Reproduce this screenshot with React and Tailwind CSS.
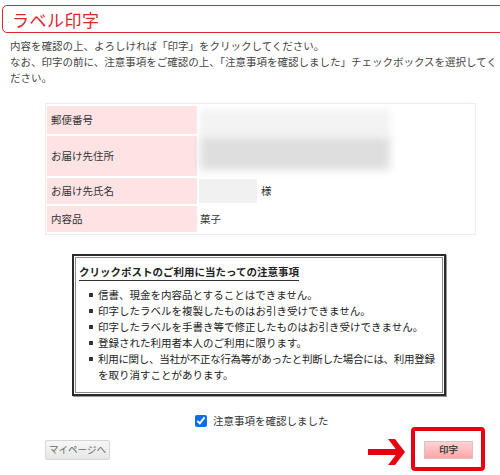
export default function App() {
  const font = { fontFamily: '"Noto Sans CJK JP", "Noto Sans", sans-serif' };
  return (
    <div className="w-[500px] h-[475px] overflow-hidden bg-white text-[#333] text-[10.5px] leading-[16px]" style={font}>
      <div className="pt-[5px] pl-[2px]">
        <div className="w-[520px] h-[28px] border-[1.5px] border-[#e0262d] rounded-[5px] flex items-center pl-[9px]">
          <span className="text-[17px] text-[#e0262d] leading-none tracking-[0.5px]">ラベル印字</span>
        </div>
      </div>

      <div className="mt-[5px] pl-[10px] pr-[2px] text-[#444]">
        <p>内容を確認の上、よろしければ「印字」をクリックしてください。</p>
        <p>なお、印字の前に、注意事項をご確認の上、「注意事項を確認しました」チェックボックスを選択してく<br />ださい。</p>
      </div>

      <table className="mt-[17px] ml-[45px] w-[431px] border border-[#fbe6e7] border-separate border-spacing-x-[1px] border-spacing-y-[2px]">
        <tbody>
          <tr className="h-[28px]">
            <td className="w-[150px] bg-[#fde3e4] pl-[4px] align-middle">郵便番号</td>
            <td className="pl-[2px] align-bottom">
              <div className="w-[190px] h-[24px] bg-[#f3f3f3] blur-[3px]" />
            </td>
          </tr>
          <tr className="h-[40px]">
            <td className="bg-[#fde3e4] pl-[4px] align-middle">お届け先住所</td>
            <td className="pl-[2px] align-top">
              <div className="w-[190px] h-[34px] bg-[#dedede] blur-[4px]" />
            </td>
          </tr>
          <tr className="h-[26px]">
            <td className="bg-[#fde3e4] pl-[4px] align-middle">お届け先氏名</td>
            <td className="pl-[1px] align-middle">
              <div className="flex items-center gap-[4px]">
                <div className="w-[58px] h-[24px] bg-[#f1f1f1]" />
                <span>様</span>
              </div>
            </td>
          </tr>
          <tr className="h-[26px]">
            <td className="bg-[#fde3e4] pl-[4px] align-middle">内容品</td>
            <td className="pl-[2px] align-middle">菓子</td>
          </tr>
        </tbody>
      </table>

      <div className="mt-[19px] ml-[72px] w-[374px] border-2 border-[#2a2a2a] p-px shadow-[1px_1px_0_#999]">
        <div className="border border-[#8a8a8a] pl-[3px] pt-[5px] pb-[9px] text-[#222]">
          <div className="inline-block font-bold border-b border-[#333] leading-[17px]">クリックポストのご利用に当たっての注意事項</div>
          <ul className="mt-[6px] pl-[10px]">
            {[
              '信書、現金を内容品とすることはできません。',
              '印字したラベルを複製したものはお引き受けできません。',
              '印字したラベルを手書き等で修正したものはお引き受けできません。',
              '登録された利用者本人のご利用に限ります。',
            ].map((t) => (
              <li key={t} className="flex">
                <span className="w-[9px] shrink-0 flex items-center"><span className="block w-[4px] h-[4px] bg-[#333]" /></span>
                <span>{t}</span>
              </li>
            ))}
            <li className="flex">
              <span className="w-[9px] shrink-0 h-[16px] flex items-center"><span className="block w-[4px] h-[4px] bg-[#333]" /></span>
              <span className="flex flex-col">
                <span className="whitespace-nowrap tracking-[-0.3px]">利用に関し、当社が不正な行為等があったと判断した場合には、利用登録</span>
                <span>を取り消すことがあります。</span>
              </span>
            </li>
          </ul>
        </div>
      </div>

      <div className="mt-[17px] flex items-center ml-[195px] gap-[6px]">
        <input type="checkbox" checked readOnly className="w-[12px] h-[12px] m-0 accent-[#0b6ee8]" />
        <span className="text-[#333]">注意事項を確認しました</span>
      </div>

      <div className="mt-[-2px] flex items-center pl-[45px] pr-[15px]">
        <button className="w-[65px] h-[20px] mt-[2px] border border-[#d6d6d6] rounded-[2px] bg-gradient-to-b from-[#f7f7f7] to-[#e6e6e6] text-[9.5px] text-[#666] leading-none">マイページへ</button>
        <div className="flex-1" />
        <svg width="37" height="27" viewBox="0 0 37 27" className="mt-[6px] mr-[6px]">
          <rect x="0" y="10" width="31" height="6" fill="#e60012" />
          <polygon points="20,0 27,0 37,13 27,26 20,26 30,13" fill="#e60012" />
        </svg>
        <div className="w-[74px] h-[44px] border-4 border-[#e60012] rounded-[4px] pl-[9px] pt-[10px]">
          <button className="w-[49px] h-[18px] border border-[#d8c2c2] bg-gradient-to-b from-[#ffd3d3] to-[#ffa6a6] text-[9.5px] text-[#444] leading-none font-bold">印字</button>
        </div>
      </div>
    </div>
  );
}
